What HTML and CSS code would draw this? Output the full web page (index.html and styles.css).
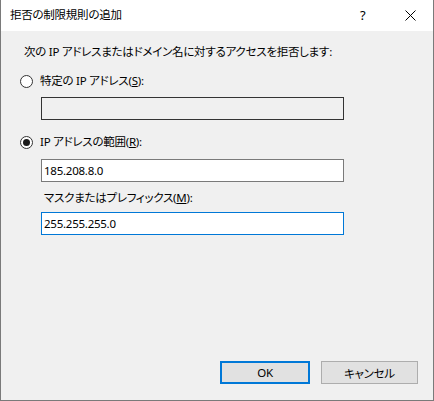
FILE: index.html
```html
<!DOCTYPE html>
<html lang="ja">
<head>
<meta charset="utf-8">
<link rel="stylesheet" href="styles.css">
</head>
<body>
<div class="window">
  <div class="titlebar">
    <span class="title">拒否の制限規則の追加</span>
    <span class="help">?</span>
    <span class="close">
      <svg width="11" height="11" viewBox="0 0 11 11"><path d="M0.5 0.5 L10.5 10.5 M10.5 0.5 L0.5 10.5" stroke="#000" stroke-width="1" fill="none"/></svg>
    </span>
  </div>
  <div class="content">
    <div class="intro">次の IP アドレスまたはドメイン名に対するアクセスを拒否します:</div>
    <div class="radio-row row-first">
      <span class="radio"></span>
      <span class="label">特定の IP アドレス(<u>S</u>):</span>
    </div>
    <div class="textbox disabled box-first"></div>
    <div class="radio-row row-second">
      <span class="radio checked"></span>
      <span class="label">IP アドレスの範囲(<u>R</u>):</span>
    </div>
    <div class="textbox box-second">185.208.8.0</div>
    <div class="sublabel">マスクまたはプレフィックス(<u>M</u>):</div>
    <div class="textbox focused box-third">255.255.255.0</div>
  </div>
  <div class="footer">
    <div class="button default">OK</div>
    <div class="button cancel">キャンセル</div>
  </div>
</div>
</body>
</html>
```

FILE: styles.css
```css
html, body {
  margin: 0;
  padding: 0;
}
body {
  width: 434px;
  height: 401px;
  overflow: hidden;
  font-family: "Noto Sans", "Noto Sans CJK JP", sans-serif;
  font-size: 11.5px;
  letter-spacing: -0.25px;
  color: #000;
  font-feature-settings: "palt";
}
.window {
  box-sizing: border-box;
  width: 434px;
  height: 401px;
  border: 1px solid #7a7a7a;
  border-top: none;
  background: #f0f0f0;
  display: flex;
  flex-direction: column;
}
.titlebar {
  height: 31px;
  background: #fff;
  display: flex;
  align-items: center;
  padding-left: 9px;
  padding-bottom: 1px;
  box-sizing: border-box;
}
.title {
  flex: 1;
  line-height: 16px;
}
.help {
  width: 10px;
  font-size: 13px;
  margin-right: 35px;
  line-height: 16px;
}
.close {
  display: flex;
  width: 11px;
  height: 11px;
  margin-right: 17px;
}
.content {
  padding-left: 19px;
  display: flex;
  flex-direction: column;
  align-items: flex-start;
}
.intro {
  margin-top: 13px;
  margin-left: 4px;
  line-height: 16px;
}
.radio-row {
  display: flex;
  align-items: center;
  height: 16px;
}
.row-first { margin-top: 13px; }
.row-second { margin-top: 14px; }
.radio {
  box-sizing: border-box;
  width: 13px;
  height: 13px;
  border: 1px solid #333;
  border-radius: 50%;
  background: #fff;
  margin-right: 7px;
  display: flex;
  align-items: center;
  justify-content: center;
}
.radio.checked::after {
  content: "";
  width: 7px;
  height: 7px;
  border-radius: 50%;
  background: #1a1a1a;
}
.label {
  line-height: 16px;
}
.textbox {
  box-sizing: border-box;
  width: 303px;
  height: 23px;
  margin-left: 21px;
  border: 1px solid #7a7a7a;
  background: #fff;
  padding-left: 2px;
  line-height: 21px;
}
.textbox.disabled {
  background: #f0f0f0;
  border-color: #333;
}
.textbox.focused {
  border-color: #0078d7;
}
.box-first { margin-top: 8px; }
.box-second { margin-top: 9px; }
.sublabel {
  margin-top: 8px;
  margin-left: 24px;
  line-height: 16px;
}
.box-third { margin-top: 6px; }
.footer {
  margin-top: auto;
  display: flex;
  justify-content: flex-end;
  padding-right: 15px;
  padding-bottom: 16px;
  gap: 11px;
}
.button {
  box-sizing: border-box;
  height: 23px;
  background: #e1e1e1;
  border: 1px solid #adadad;
  display: flex;
  align-items: center;
  justify-content: center;
}
.button.default {
  width: 90px;
  border: 2px solid #0078d7;
}
.button.cancel {
  width: 97px;
}
```
